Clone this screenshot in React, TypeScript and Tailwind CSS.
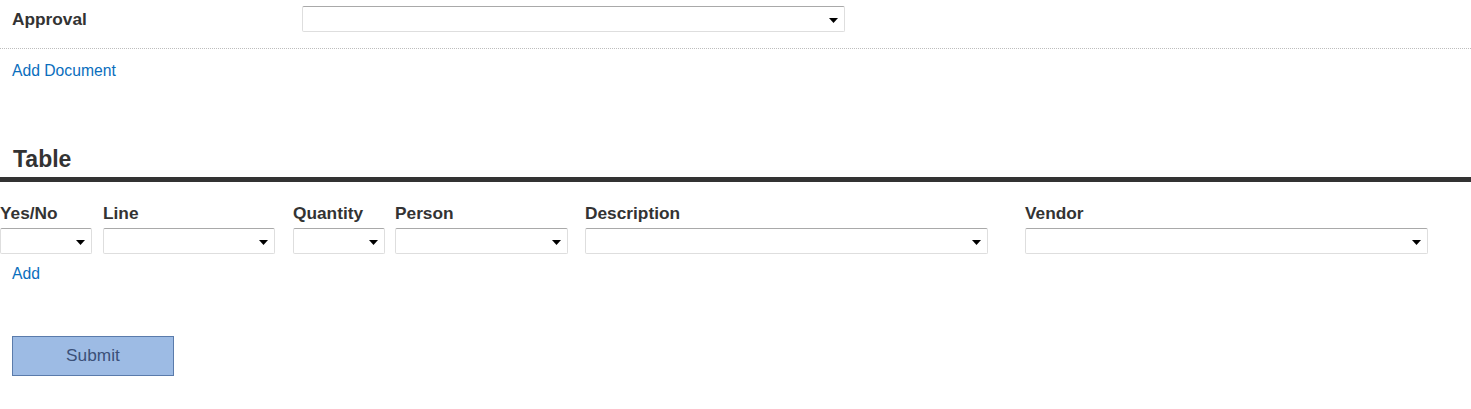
import React from 'react';

const Select: React.FC<{ width: string }> = ({ width }) => (
  <div
    className={`${width} h-[26px] flex items-center justify-end pr-[6px] bg-white border border-[#dedede] border-t-[#a9a9a9] rounded-[2px]`}
  >
    <svg width="9" height="5" viewBox="0 0 9 5" className="mt-[2px]">
      <polygon points="0,0 9,0 4.5,5" fill="#000" />
    </svg>
  </div>
);

const columns = [
  { label: 'Yes/No', cell: 'w-[103px]', select: 'w-[92px]' },
  { label: 'Line', cell: 'w-[190px]', select: 'w-[172px]' },
  { label: 'Quantity', cell: 'w-[102px]', select: 'w-[92px]' },
  { label: 'Person', cell: 'w-[190px]', select: 'w-[173px]' },
  { label: 'Description', cell: 'w-[440px]', select: 'w-[403px]' },
  { label: 'Vendor', cell: 'w-[403px]', select: 'w-[403px]' },
];

export default function App() {
  return (
    <div className="w-[1471px] h-[409px] bg-white text-[#333] font-['Liberation_Sans',Arial,sans-serif] overflow-hidden">
      {/* Approval row */}
      <div className="flex items-center pt-[6px] pb-[16px] border-b border-dotted border-[#bdbdbd]">
        <div className="w-[302px] pl-3 text-[17.3px] font-bold leading-[20px]">Approval</div>
        <Select width="w-[543px]" />
      </div>

      <div className="mt-[13px] pl-3 text-[15.7px] leading-[18px] text-[#0a6ebd]">Add Document</div>

      {/* Table section */}
      <h2 className="mt-[66px] mb-[5px] pl-[13px] text-[23px] font-bold leading-[26px]">Table</h2>
      <div className="h-[5px] bg-[#333]" />

      <div className="flex mt-[21px]">
        {columns.map((c) => (
          <div key={c.label} className={`${c.cell} flex flex-col gap-[5px] shrink-0`}>
            <div className="text-[17.3px] font-bold leading-[20px]">{c.label}</div>
            <Select width={c.select} />
          </div>
        ))}
      </div>

      <div className="mt-[11px] pl-3 text-[15.7px] leading-[18px] text-[#0a6ebd]">Add</div>

      <div className="mt-[53px] pl-3">
        <button className="w-[162px] h-[40px] bg-[#9dbbe4] border border-[#5a7bab] text-[#3b5078] text-[17.3px]">
          Submit
        </button>
      </div>
    </div>
  );
}
